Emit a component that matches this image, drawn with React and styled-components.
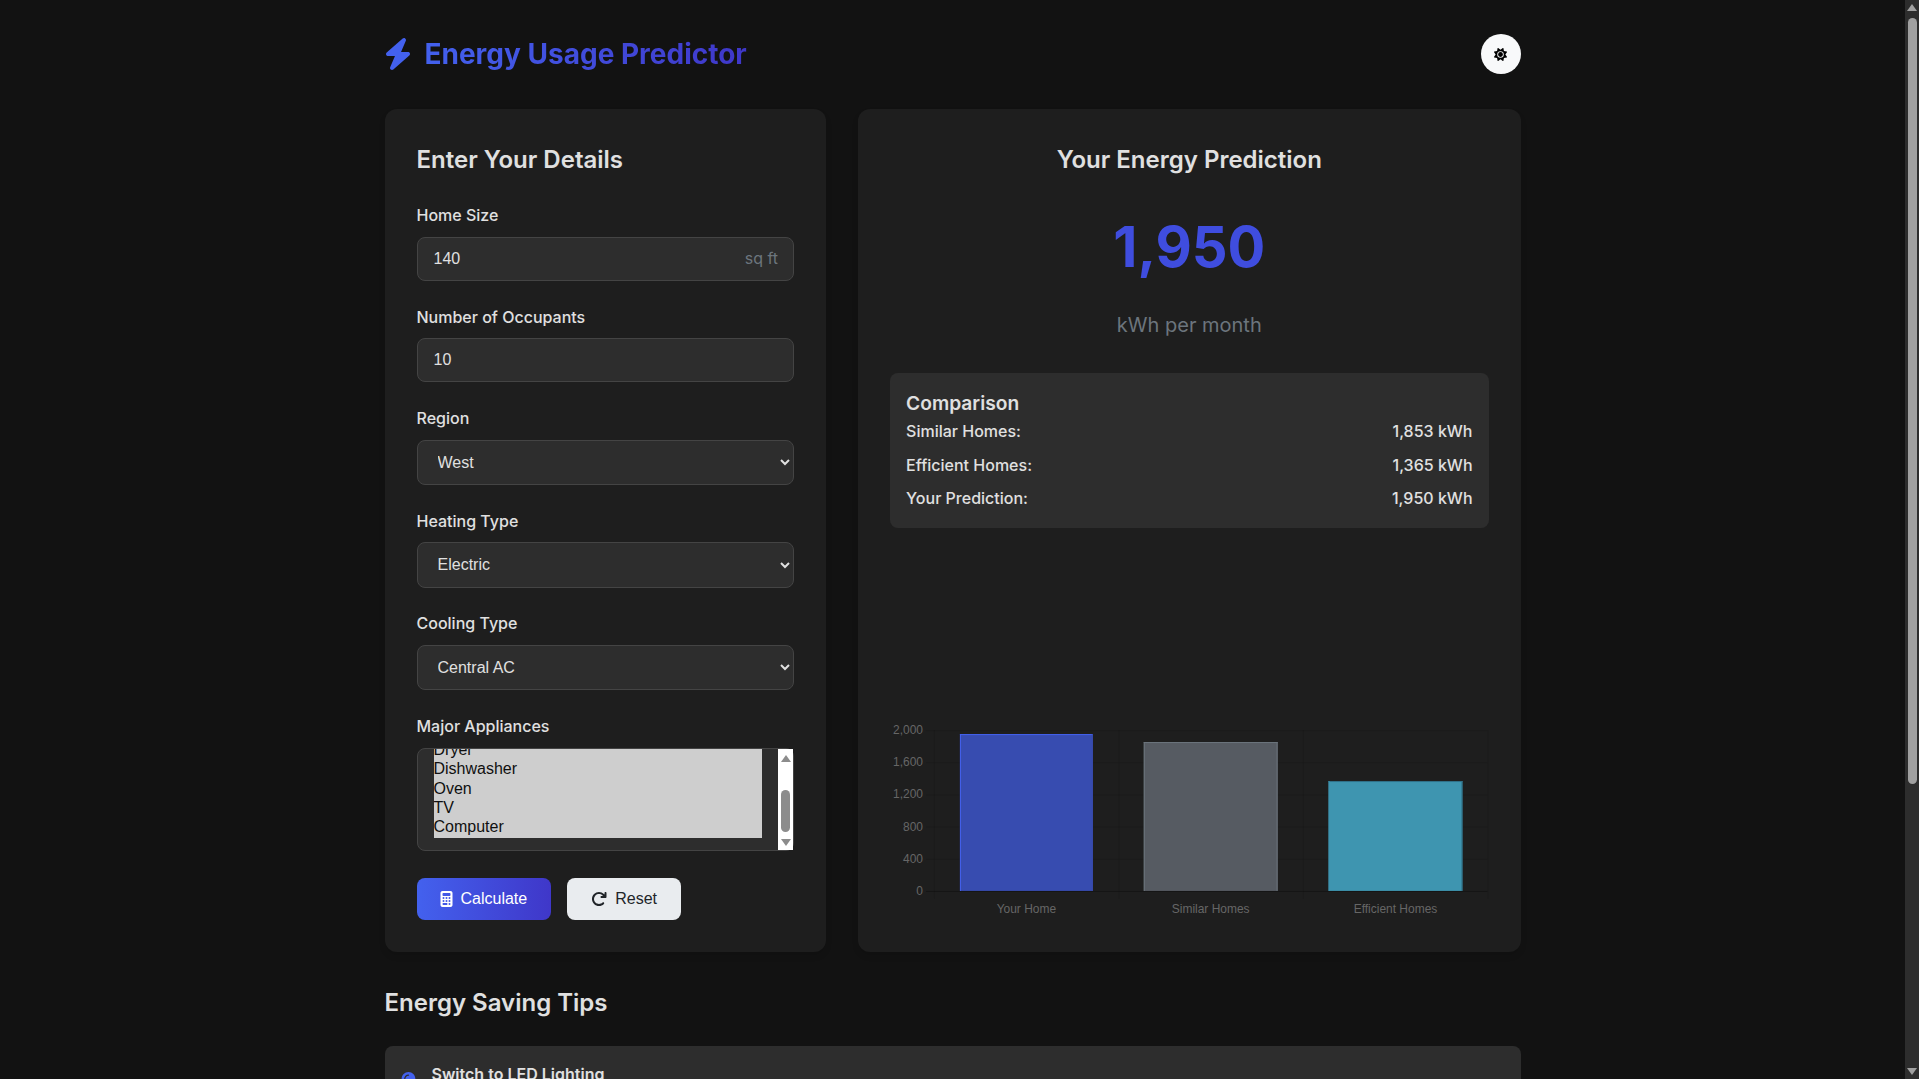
import React, { useEffect, useRef } from "react";
import styled, { createGlobalStyle } from "styled-components";
import { FaBolt, FaSun, FaCalculator, FaLightbulb, FaTemperatureHalf, FaPlug, FaHouse, FaDroplet, FaArrowRotateRight } from "react-icons/fa6";

const Global = createGlobalStyle`
  body {
    margin: 0;
    background: #121212;
    color: #e0e0e0;
    font-family: Inter, "Liberation Sans", sans-serif;
    font-size: 16px;
    line-height: 1.6;
  }
  option { padding: 0; min-height: 0; height: 19.3px; line-height: 19.3px; }
`;

const Viewport = styled.div`
  padding-right: 14px;
`;
const Page = styled.div`
  max-width: 1136px;
  margin: 0 auto;
  padding: 32px 32px 40px;
`;
const PageScrollbar = styled.div`
  position: fixed;
  top: 0;
  right: 0;
  bottom: 0;
  width: 14px;
  background: #2d2d2d;
`;
const PageThumb = styled.div`
  position: absolute;
  top: 18px;
  left: 3px;
  width: 9px;
  height: 766px;
  border-radius: 5px;
  background: #a0a0a0;
`;
const Arrow = styled.span`
  position: absolute;
  left: ${(p) => p.$left}px;
  ${(p) => (p.$down ? `bottom: ${p.$inset}px;` : `top: ${p.$inset}px;`)}
  width: 0;
  height: 0;
  border-left: 5px solid transparent;
  border-right: 5px solid transparent;
  ${(p) => (p.$down ? "border-top" : "border-bottom")}: 7px solid ${(p) => p.$color};
`;
const Header = styled.header`
  display: flex;
  justify-content: space-between;
  align-items: center;
  height: 44px;
  margin-bottom: 33px;
`;
const Logo = styled.div`
  display: flex;
  align-items: center;
  gap: 13px;
  svg { width: 28px; height: 32px; color: #4361ee; margin-left: -1px; }
`;
const Title = styled.h1`
  margin: 0;
  font-size: 28px;
  font-weight: 700;
  line-height: 44px;
  background: linear-gradient(90deg, #4361ee, #3f37c9);
  -webkit-background-clip: text;
  background-clip: text;
  color: transparent;
`;
const ThemeToggle = styled.button`
  width: 40px;
  height: 40px;
  border: 0;
  padding: 0;
  border-radius: 50%;
  background: #f8f9fa;
  color: #000;
  display: flex;
  align-items: center;
  justify-content: center;
  svg { width: 13px; height: 13px; }
`;
const Columns = styled.main`
  display: grid;
  grid-template-columns: 2fr 3fr;
  gap: 32px;
`;
const Card = styled.section`
  background: #1e1e1e;
  border-radius: 12px;
  padding: 32px;
  display: flex;
  flex-direction: column;
  box-shadow: 0 4px 6px rgba(0, 0, 0, 0.1);
`;
const CardTitle = styled.h2`
  margin: 0 0 24px;
  font-size: 24px;
  font-weight: 600;
  line-height: 38.4px;
  text-align: ${(p) => (p.$center ? "center" : "left")};
`;
const Field = styled.div`
  margin-bottom: ${(p) => p.$mb || 23.8}px;
  position: relative;
`;
const Label = styled.label`
  display: block;
  font-size: 16px;
  font-weight: 500;
  line-height: 25.6px;
  margin-bottom: 8px;
  white-space: nowrap;
`;
const TextInput = styled.input`
  display: block;
  box-sizing: border-box;
  width: 100%;
  height: 44px;
  padding: 12px 16px;
  background: #2d2d2d;
  color: #e0e0e0;
  border: 1px solid #444;
  border-radius: 8px;
  font: 16px "Liberation Sans", Arial, sans-serif;
  outline: none;
`;
const Suffix = styled.span`
  position: absolute;
  right: 16px;
  bottom: 10px;
  color: #6c757d;
  font-size: 16px;
  line-height: 26px;
`;
const Select = styled.select`
  display: block;
  box-sizing: border-box;
  width: 100%;
  height: 45.2px;
  padding: 12px 16px;
  background: #2d2d2d;
  color: #e0e0e0;
  border: 1px solid #444;
  border-radius: 8px;
  font: 16px "Liberation Sans", Arial, sans-serif;
`;
const ListWrap = styled.div`
  position: relative;
`;
const ListBox = styled.select`
  display: block;
  box-sizing: border-box;
  width: 100%;
  height: 103px;
  padding: 12px 31px 12px 16px;
  background: #2d2d2d;
  color: #e0e0e0;
  border: 1px solid #444;
  border-radius: 8px;
  font: 16px "Liberation Sans", Arial, sans-serif;
  outline: none;
  overflow: hidden;
`;
const ListScrollbar = styled.div`
  position: absolute;
  top: 1px;
  right: 1px;
  bottom: 1px;
  width: 15px;
  background: #fff;
`;
const ListThumb = styled.div`
  position: absolute;
  left: 3px;
  top: 41px;
  width: 9px;
  height: 42px;
  border-radius: 5px;
  background: #8c8c8c;
`;
const Buttons = styled.div`
  display: flex;
  gap: 16px;
`;
const Button = styled.button`
  display: inline-flex;
  align-items: center;
  gap: 8px;
  height: 42px;
  padding: 0 24px;
  border: 0;
  border-radius: 8px;
  font: 16px "Liberation Sans", Arial, sans-serif;
  background: ${(p) => (p.$primary ? "linear-gradient(90deg, #4361ee, #3f37c9)" : "#e9ecef")};
  color: ${(p) => (p.$primary ? "#fff" : "#212529")};
  svg { width: ${(p) => (p.$primary ? 13 : 16)}px; height: 16px; margin-left: ${(p) => (p.$primary ? -1 : 0)}px; }
`;
const BigValue = styled.div`
  font-size: 56px;
  font-weight: 700;
  line-height: 89.6px;
  color: #3f4ddf;
  text-align: center;
  margin: 0 0 16px;
`;
const Unit = styled.div`
  font-size: 20px;
  line-height: 32px;
  color: #6c757d;
  text-align: center;
  margin-bottom: 32px;
`;
const Comparison = styled.div`
  background: #2d2d2d;
  border-radius: 8px;
  padding: 16px;
`;
const CompareTitle = styled.h3`
  margin: 0 0 1px;
  font-size: 19.2px;
  font-weight: 600;
  line-height: 29px;
`;
const CompareRow = styled.div`
  display: flex;
  justify-content: space-between;
  font-weight: 500;
  line-height: 25.6px;
  & + & { margin-top: 8px; }
`;
const ChartBox = styled.div`
  margin-top: auto;
  height: 200px;
  svg { display: block; width: 100%; height: 100%; }
  text { font: 12px "Liberation Sans", Arial, sans-serif; fill: #666; }
`;
const TipsHeading = styled.h2`
  margin: 32px 0 23.4px;
  font-size: 24px;
  font-weight: 600;
  line-height: 38.4px;
`;
const TipsList = styled.ul`
  list-style: none;
  margin: 0;
  padding: 0;
  display: flex;
  flex-direction: column;
  gap: 16px;
`;
const Tip = styled.li`
  display: flex;
  gap: 16px;
  background: #2d2d2d;
  border-radius: 8px;
  padding: 16px;
  svg { flex: none; width: 15px; height: 20px; color: #4361ee; margin-top: 10px; }
`;
const TipTitle = styled.h4`
  margin: 0;
  font-size: 16px;
  font-weight: 600;
  line-height: 25.6px;
`;
const TipText = styled.p`
  margin: 0;
  font-size: 14.4px;
  color: #adb5bd;
`;

const appliances = ["Refrigerator", "Washer", "Dryer", "Dishwasher", "Oven", "TV", "Computer"];
const compare = [
  ["Similar Homes:", "1,853 kWh"],
  ["Efficient Homes:", "1,365 kWh"],
  ["Your Prediction:", "1,950 kWh"],
];
const tips = [
  [FaLightbulb, "Switch to LED Lighting", "LED bulbs use up to 75% less energy than incandescent lighting."],
  [FaTemperatureHalf, "Adjust Your Thermostat", "Lowering your thermostat by a few degrees can cut heating costs."],
  [FaPlug, "Unplug Idle Electronics", "Devices on standby still draw power, so unplug them when not in use."],
  [FaHouse, "Seal Air Leaks", "Weatherstripping around doors and windows keeps conditioned air inside."],
  [FaDroplet, "Wash With Cold Water", "Most of the energy used by a washer goes to heating the water."],
];

const CHART_X = 890;
const CHART_Y = 720;
const yTicks = [
  ["2,000", 730],
  ["1,600", 762.2],
  ["1,200", 794.4],
  ["800", 826.6],
  ["400", 858.8],
  ["0", 891],
];
const xGrid = [934, 1118.67, 1303.33, 1488];
const bars = [
  { label: "Your Home", x: 960, right: 1093, top: 734, fill: "#374cb0", stroke: "#4361ee", leftStroke: "#4361ee", rightStroke: "#374cb0" },
  { label: "Similar Homes", x: 1144, right: 1278, top: 742, fill: "#565b62", stroke: "#6c757d", leftStroke: "#6c757d", rightStroke: "#6c757d" },
  { label: "Efficient Homes", x: 1329, right: 1463, top: 781, fill: "#3e95b0", stroke: "#2f6f88", leftStroke: "#3e95b0", rightStroke: "#2f6f88" },
];

function Chart() {
  return (
    <ChartBox>
      <svg viewBox="0 0 599 200" role="img" aria-label="Energy comparison bar chart">
        <g transform={`translate(${-CHART_X} ${-CHART_Y})`}>
          {xGrid.map((x) => (
            <line key={x} x1={x + 0.5} x2={x + 0.5} y1="730" y2="899" stroke="rgba(0,0,0,0.1)" />
          ))}
          {yTicks.map(([label, y]) => (
            <g key={label}>
              <line x1="926" x2="1488" y1={y + 0.5} y2={y + 0.5} stroke={label === "0" ? "rgba(0,0,0,0.3)" : "rgba(0,0,0,0.1)"} />
              <text x="923" y={y + 4} textAnchor="end">{label}</text>
            </g>
          ))}
          {bars.map((b) => (
            <g key={b.label}>
              <rect x={b.x} y={b.top} width={b.right - b.x} height={891 - b.top} fill={b.fill} />
              <line x1={b.x} x2={b.right} y1={b.top + 0.5} y2={b.top + 0.5} stroke={b.stroke} />
              <line x1={b.x + 0.5} x2={b.x + 0.5} y1={b.top} y2="891" stroke={b.leftStroke} />
              <line x1={b.right - 0.5} x2={b.right - 0.5} y1={b.top} y2="891" stroke={b.rightStroke} />
              <text x={(b.x + b.right) / 2} y="913" textAnchor="middle">{b.label}</text>
            </g>
          ))}
        </g>
      </svg>
    </ChartBox>
  );
}

export default function App() {
  const list = useRef(null);
  useEffect(() => {
    if (list.current) list.current.scrollTop = list.current.scrollHeight;
  }, []);
  return (
    <>
      <Global />
      <Viewport>
        <Page>
          <Header>
            <Logo>
              <FaBolt />
              <Title>Energy Usage Predictor</Title>
            </Logo>
            <ThemeToggle aria-label="Toggle theme"><FaSun /></ThemeToggle>
          </Header>
          <Columns>
            <Card>
              <CardTitle>Enter Your Details</CardTitle>
              <Field>
                <Label>Home Size</Label>
                <TextInput type="number" defaultValue="140" />
                <Suffix>sq ft</Suffix>
              </Field>
              <Field>
                <Label>Number of Occupants</Label>
                <TextInput type="number" defaultValue="10" />
              </Field>
              <Field>
                <Label>Region</Label>
                <Select defaultValue="West">
                  {["Northeast", "Midwest", "South", "West"].map((o) => <option key={o}>{o}</option>)}
                </Select>
              </Field>
              <Field>
                <Label>Heating Type</Label>
                <Select defaultValue="Electric">
                  {["Electric", "Natural Gas", "Oil", "Heat Pump"].map((o) => <option key={o}>{o}</option>)}
                </Select>
              </Field>
              <Field>
                <Label>Cooling Type</Label>
                <Select defaultValue="Central AC">
                  {["Central AC", "Window Units", "None"].map((o) => <option key={o}>{o}</option>)}
                </Select>
              </Field>
              <Field $mb={27.4}>
                <Label>Major Appliances</Label>
                <ListWrap>
                  <ListBox ref={list} multiple defaultValue={appliances}>
                    {appliances.map((o) => <option key={o}>{o}</option>)}
                  </ListBox>
                  <ListScrollbar>
                    <Arrow $left={2.5} $inset={6} $color="#8c8c8c" />
                    <ListThumb />
                    <Arrow $down $left={2.5} $inset={4} $color="#8c8c8c" />
                  </ListScrollbar>
                </ListWrap>
              </Field>
              <Buttons>
                <Button $primary><FaCalculator />Calculate</Button>
                <Button><FaArrowRotateRight />Reset</Button>
              </Buttons>
            </Card>
            <Card>
              <CardTitle $center>Your Energy Prediction</CardTitle>
              <BigValue>1,950</BigValue>
              <Unit>kWh per month</Unit>
              <Comparison>
                <CompareTitle>Comparison</CompareTitle>
                {compare.map(([k, v]) => (
                  <CompareRow key={k}><span>{k}</span><span>{v}</span></CompareRow>
                ))}
              </Comparison>
              <Chart />
            </Card>
          </Columns>
          <section>
            <TipsHeading>Energy Saving Tips</TipsHeading>
            <TipsList>
              {tips.map(([Icon, title, text]) => (
                <Tip key={title}>
                  <Icon />
                  <div>
                    <TipTitle>{title}</TipTitle>
                    <TipText>{text}</TipText>
                  </div>
                </Tip>
              ))}
            </TipsList>
          </section>
        </Page>
      </Viewport>
      <PageScrollbar>
        <Arrow $left={2} $inset={4} $color="#a0a0a0" />
        <PageThumb />
        <Arrow $down $left={2} $inset={4} $color="#a0a0a0" />
      </PageScrollbar>
    </>
  );
}
